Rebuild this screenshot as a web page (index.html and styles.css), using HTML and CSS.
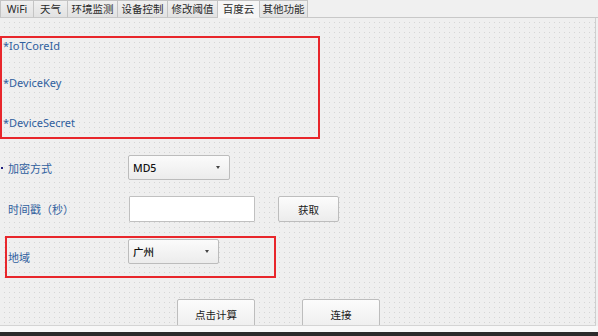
FILE: index.html
```html
<!DOCTYPE html>
<html lang="zh">
<head>
<meta charset="utf-8">
<link rel="stylesheet" href="styles.css">
</head>
<body>
<div class="window">
  <div class="tabbar">
    <div class="tab w34">WiFi</div>
    <div class="tab w34">天气</div>
    <div class="tab w50">环境监测</div>
    <div class="tab w50">设备控制</div>
    <div class="tab w50">修改阈值</div>
    <div class="tab w42 active">百度云</div>
    <div class="tab w48">其他功能</div>
    <div class="tab-rest"></div>
  </div>
  <div class="pane">
    <div class="redbox box-keys">
      <div class="key k1">*IoTCoreId</div>
      <div class="key k2">*DeviceKey</div>
      <div class="key k3">*DeviceSecret</div>
    </div>
    <div class="row row-enc">
      <span class="marker"></span>
      <div class="label">加密方式</div>
      <div class="combo combo-md5"><span>MD5</span><span class="arrow"></span></div>
    </div>
    <div class="row row-ts">
      <div class="label">时间戳（秒）</div>
      <div class="input"></div>
      <div class="btn btn-get">获取</div>
    </div>
    <div class="redbox box-region">
      <div class="label">地域</div>
      <div class="combo combo-region"><span>广州</span><span class="arrow"></span></div>
    </div>
    <div class="row row-btns">
      <div class="btn btn-big btn-calc">点击计算</div>
      <div class="btn btn-big btn-conn">连接</div>
    </div>
  </div>
  <div class="footer-strip"></div>
  <div class="footer-dark"></div>
</div>
</body>
</html>
```
FILE: styles.css
```css
* { box-sizing: border-box; }
html, body { margin: 0; padding: 0; }
body {
  width: 598px;
  height: 336px;
  overflow: hidden;
  background: #f0f0f0;
  font-family: "Noto Sans", "Noto Sans CJK SC", sans-serif;
  font-size: 11px;
  color: #222;
}
.window { width: 598px; height: 336px; display: flex; flex-direction: column; }

.tabbar { display: flex; height: 18px; flex: none; }
.tab {
  height: 18px;
  border: 1px solid #c4c4c4;
  border-left: none;
  border-bottom: 1px solid #c8c8c8;
  background: linear-gradient(#f0f0f0, #e2e2e2);
  display: flex;
  align-items: center;
  justify-content: center;
  font-size: 10.5px;
  color: #2a2a2a;
  line-height: 1;
  padding-top: 1px;
}
.tab:first-child { border-left: 1px solid #c4c4c4; }
.tab.active {
  background: #f6f6f6;
  border-bottom-color: #f6f6f6;
}
.w34 { width: 34px; }
.w42 { width: 42px; }
.w48 { width: 48px; }
.w50 { width: 50px; }
.tab-rest { flex: 1; border-bottom: 1px solid #c8c8c8; position: relative; }

.pane {
  height: 308px;
  flex: none;
  width: 596px;
  border-right: 1px solid #cfcfcf;
  border-bottom: 1px solid #d4d4d4;
  background-color: #efefef;
  background-image: radial-gradient(circle, #d6d6d6 0.6px, transparent 0.9px);
  background-size: 5px 5px;
  background-position: 2px 2px;
  overflow: hidden;
  position: relative;
}

.redbox { border: 2px solid #e8262b; }
.box-keys {
  margin-top: 18px;
  width: 320px;
  height: 103px;
  padding-left: 1px;
}
.key { color: #30609e; height: 15px; line-height: 15px; font-size: 11px; }
.k1 { margin-top: 0; }
.k2 { margin-top: 22px; }
.k3 { margin-top: 25px; }

.row { display: flex; align-items: center; position: relative; }
.label { color: #30609e; font-size: 11px; }
.row-enc { margin-top: 16px; height: 25px; padding-left: 8px; }
.row-enc .label { width: 120px; }
.marker {
  position: absolute;
  left: 1px; top: 12px;
  width: 2px; height: 2px;
  background: #202080;
}

.combo {
  height: 25px;
  border: 1px solid #bcbcbc;
  border-radius: 2px;
  background: linear-gradient(#fbfbfb, #ececec);
  display: flex;
  align-items: center;
  justify-content: space-between;
  padding: 0 9px 0 4px;
  font-size: 10.5px;
  color: #111;
  font-weight: 500;
}
.arrow {
  width: 0; height: 0;
  border-left: 2.5px solid transparent;
  border-right: 2.5px solid transparent;
  border-top: 3px solid #444;
}
.combo-md5 { width: 102px; }

.row-ts { margin-top: 16px; height: 26px; padding-left: 8px; }
.row-ts .label { width: 121px; }
.input {
  width: 126px; height: 26px;
  border: 1px solid #c0c0c0;
  background: #fff;
  border-radius: 1px;
}
.btn {
  height: 26px;
  border: 1px solid #bdbdbd;
  border-radius: 2px;
  background: linear-gradient(#fcfcfc, #ececec);
  display: flex;
  align-items: center;
  justify-content: center;
  font-size: 10.5px;
  color: #1a1a1a;
}
.btn-get { width: 61px; margin-left: 23px; }

.box-region {
  margin-top: 14px;
  margin-left: 5px;
  width: 271px;
  height: 42px;
  display: flex;
  align-items: center;
  padding-left: 1px;
}
.box-region .label { width: 120px; }
.combo-region { width: 91px; height: 25px; margin-top: -11px; }

.row-btns { margin-top: 21px; padding-left: 177px; align-items: flex-start; }
.btn-big { width: 78px; height: 34px; padding-bottom: 3px; }
.btn-conn { margin-left: 47px; }

.footer-strip { height: 6px; flex: none; background: #f8f8f8; }
.footer-dark { flex: 1; background: #2b2b2b; }
```
